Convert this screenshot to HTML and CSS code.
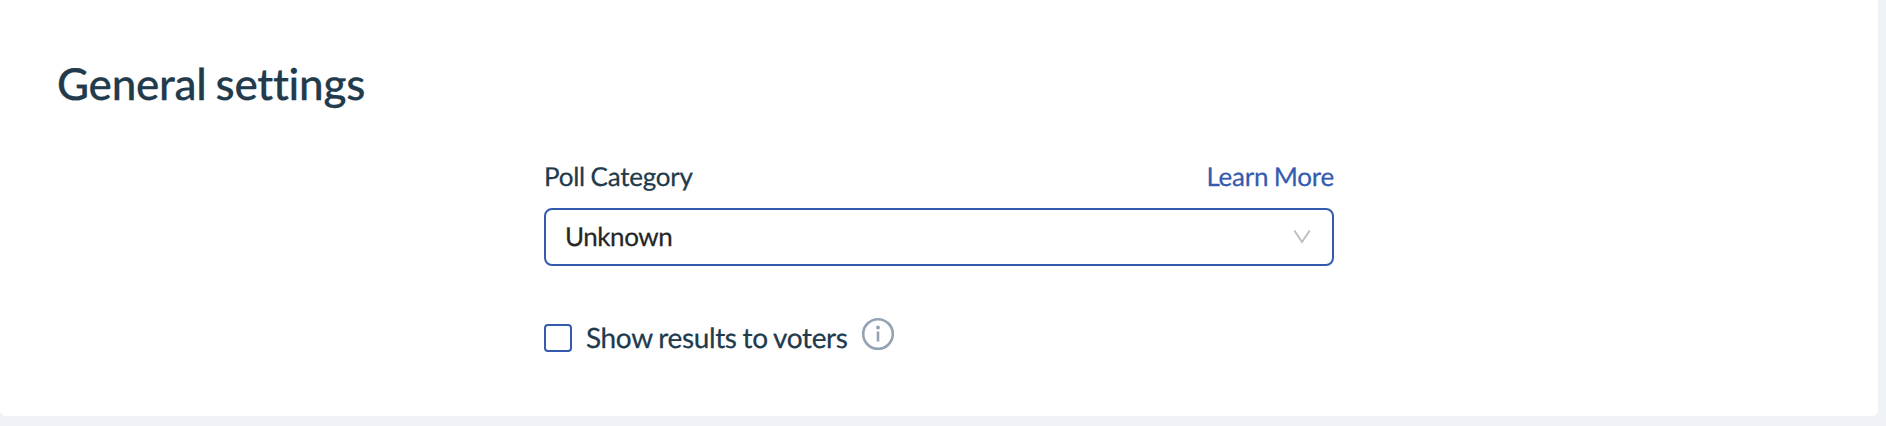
FILE: index.html
```html
<!DOCTYPE html>
<html lang="en">
<head>
  <meta charset="UTF-8">
  <title>General settings</title>
  <link rel="stylesheet" href="styles.css">
</head>
<body>
  <section class="card">
    <h2>General settings</h2>

    <form class="settings">
      <div class="label-row">
        <label id="category-label">Poll Category</label>
        <a href="#">Learn More</a>
      </div>

      <div class="select" role="combobox" aria-labelledby="category-label" tabindex="0">
        <span>Unknown</span>
        <svg class="arrow" width="18" height="16" viewBox="0 0 18 16">
          <path d="M1.3 1.5 L9 13 L16.7 1.5" />
        </svg>
      </div>

      <div class="check-row">
        <input type="checkbox" id="show-results">
        <label for="show-results">Show results to voters</label>
        <svg class="info" width="34" height="34" viewBox="0 0 34 34">
          <circle cx="17" cy="17" r="14.8" />
          <path d="M17 14.5 V24.5" />
          <circle class="dot" cx="17" cy="10.5" r="1.9" />
        </svg>
      </div>
    </form>
  </section>
</body>
</html>
```

FILE: styles.css
```css
* {
  box-sizing: border-box;
}

body {
  margin: 0;
  height: 426px;
  overflow: hidden;
  background: #eff3f7;
  font-family: Lato, sans-serif;
  font-size: 26px;
  font-variant-ligatures: none;
  text-rendering: geometricPrecision;
  letter-spacing: -0.25px;
  word-spacing: -0.8px;
  -webkit-text-stroke: 0.25px;
  color: #213a4c;
}

.card {
  width: 1878px;
  height: 416px;
  padding: 56px 57px;
  background: #ffffff;
  border-radius: 0 0 6px 6px;
}

h2 {
  margin: 0;
  font-size: 44px;
  font-weight: 500;
  line-height: 56px;
  letter-spacing: -0.25px;
  word-spacing: -1.9px;
}

.settings {
  width: 790px;
  margin: 47px 0 0 487px;
}

.label-row {
  display: flex;
  justify-content: space-between;
  line-height: 34px;
}

a {
  color: #345bb0;
  text-decoration: none;
}

.select {
  display: flex;
  align-items: center;
  justify-content: space-between;
  height: 58px;
  margin-top: 15px;
  padding: 0 21px 0 19px;
  border: 2px solid #345bb0;
  border-radius: 8px;
  color: #262626;
}

.select span {
  padding-bottom: 2px;
  letter-spacing: -0.45px;
}

.arrow path {
  fill: none;
  stroke: #bfbfbf;
  stroke-width: 2;
}

.check-row {
  display: flex;
  align-items: center;
  margin-top: 51px;
  font-size: 28px;
  line-height: 40px;
}

.check-row label {
  padding-bottom: 2px;
  margin-bottom: -1px;
  letter-spacing: -0.36px;
}

input {
  appearance: none;
  width: 28px;
  height: 28px;
  margin: 0 14px 0 0;
  border: 2px solid #345bb0;
  border-radius: 4px;
}

.info {
  margin: -8px 0 0 13px;
  fill: none;
  stroke: #94a3b3;
  stroke-width: 2.6;
}

.info .dot {
  fill: #94a3b3;
  stroke: none;
}
```
